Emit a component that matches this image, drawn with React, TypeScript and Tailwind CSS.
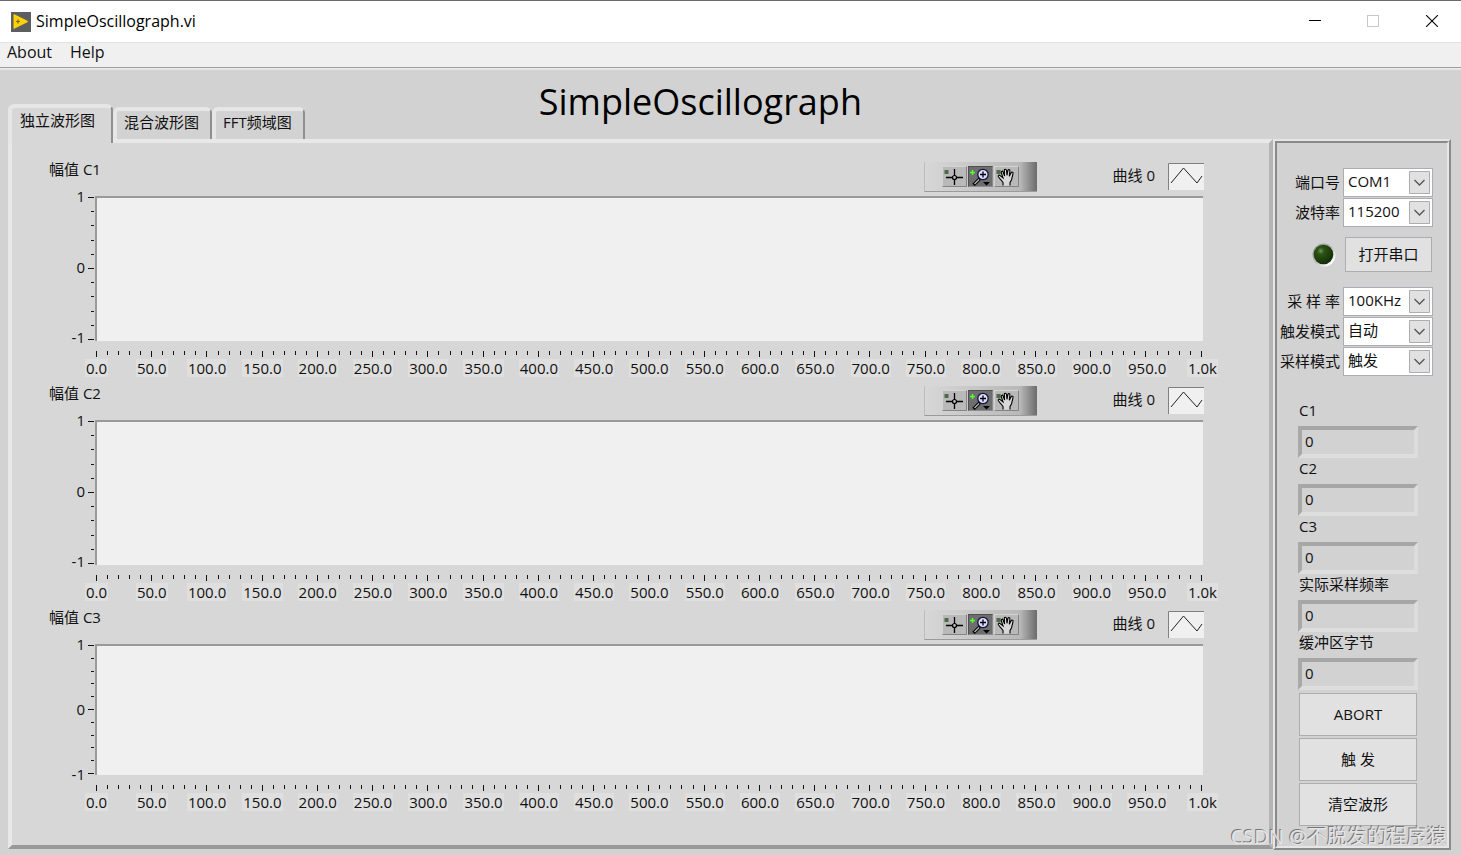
import { useState } from "react";

const TABS = ["独立波形图", "混合波形图", "FFT频域图"];

const X_LABELS = [
  "0.0", "50.0", "100.0", "150.0", "200.0", "250.0", "300.0",
  "350.0", "400.0", "450.0", "500.0", "550.0", "600.0", "650.0",
  "700.0", "750.0", "800.0", "850.0", "900.0", "950.0", "1.0k",
];

const CHARTS = [
  { title: "幅值 C1", height: "h-[145px]" },
  { title: "幅值 C2", height: "h-[145px]" },
  { title: "幅值 C3", height: "h-[131px]" },
];

const PORT_FIELDS = [
  { id: "port", label: "端口号", options: ["COM1", "COM2", "COM3"] },
  { id: "baud", label: "波特率", options: ["115200", "57600", "9600"] },
];

const SAMPLE_FIELDS = [
  { id: "rate", label: "采 样 率", options: ["100KHz", "50KHz", "10KHz"] },
  { id: "trigger", label: "触发模式", options: ["自动", "手动"] },
  { id: "mode", label: "采样模式", options: ["触发", "连续"] },
];

const READOUTS = ["C1", "C2", "C3", "实际采样频率", "缓冲区字节"];

const ACTIONS = ["ABORT", "触 发", "清空波形"];

const TitleBar = () => {
  return (
    <header className="flex h-[42px] items-center border-t border-[#6b6b6b] bg-white pl-[11px]">
      <svg className="h-5 w-5" viewBox="0 0 20 20">
        <rect width="20" height="20" fill="#5d5e60" />
        <path d="M2.500 3.200q0-1.400 1.300-.8l12.600 6.400q1.200.7 0 1.400L3.800 16.600q-1.300.6-1.300-.8z" fill="#ffd200" />
        <path d="M5 9.500h4M7 7.500v4" stroke="#6a6440" strokeWidth="1.200" />
      </svg>
      <span className="ml-[5px] pb-0.5 text-base text-black">SimpleOscillograph.vi</span>
      <div className="ml-auto flex h-full">
        <button className="flex w-[58px] items-center justify-center" aria-label="Minimize">
          <svg className="h-3 w-3" viewBox="0 0 12 12" shapeRendering="crispEdges">
            <path d="M0 4.500h12" stroke="#000" />
          </svg>
        </button>
        <button className="flex w-[58px] items-center justify-center pb-0.5" aria-label="Maximize" disabled>
          <svg className="h-3 w-3" viewBox="0 0 12 12" shapeRendering="crispEdges">
            <path d="M.5.5h11v11H.5z" fill="none" stroke="#c8c8c8" />
          </svg>
        </button>
        <button className="flex w-[59px] items-center justify-center pb-0.5" aria-label="Close">
          <svg className="h-3 w-3" viewBox="0 0 12 12">
            <path d="M0 0l12 12M12 0L0 12" stroke="#000" strokeWidth="1.100" />
          </svg>
        </button>
      </div>
    </header>
  );
};

const Tool = ({ label, active = false, children }: any) => {
  return (
    <button
      aria-label={label}
      className={`h-[21px] w-[25px] border ${
        active
          ? "border-t-[#505050] border-l-[#505050] border-r-[#8c8c8c] border-b-[#8c8c8c] bg-[#6e6e6e]"
          : "border-t-[#d4d4d4] border-l-[#d4d4d4] border-r-[#858585] border-b-[#858585] bg-[#b9b9b9]"
      }`}
    >
      <svg className="h-[19px] w-[23px]" viewBox="0 0 23 19">
        {children}
      </svg>
    </button>
  );
};

const Palette = () => {
  return (
    <div className="flex h-[30px] w-[113px] items-center gap-px border-b border-l border-b-[#9b9b9b] border-l-[#bdbdbd] bg-linear-to-r from-[#d7d7d7] via-[#b8b8b8] via-85% to-[#6c6c6c] pl-[17px]">
      <Tool label="Cursor">
        <path d="M1.500 3h4v4h-4z" fill="#4f6b45" />
        <path d="M3 10.500h17M11.500 2v16" stroke="#000" strokeWidth="1.300" />
        <circle cx="11.500" cy="10.500" r="2" fill="#b9b9b9" stroke="#000" strokeWidth="1.200" />
      </Tool>
      <Tool label="Zoom" active>
        <path d="M1 5.500h5M3.500 3v5" stroke="#5cff2a" strokeWidth="1.400" />
        <path d="M10.500 12L4.500 18" stroke="#000" strokeWidth="3.200" />
        <path d="M10 12.500L5.500 17" stroke="#bbb" strokeWidth="1.200" />
        <circle cx="14" cy="7.500" r="5.200" fill="#dcdcff" stroke="#15153c" strokeWidth="1.300" />
        <path d="M11 7.500h6M14 4.500v6" stroke="#000" strokeWidth="1.300" />
        <path d="M14 15h7l-3.500 3.500z" fill="#000" />
      </Tool>
      <Tool label="Pan">
        <path d="M1.500 3h4v4h-4z" fill="#4f6b45" />
        <path
          d="M8 18.500v-3L3.500 10c-1-1.500.6-2.400 1.700-1.300L8 11 6.200 5.500c-.3-1.500 1.400-1.900 1.900-.5l1.500 4L9.300 3.300c0-1.500 2-1.500 2.200 0l.5 5 .9-5c.4-1.300 2.200-1 2 .5l-.6 5.400 1.900-3.600c.8-1.200 2.300-.4 1.800 1L16.500 13 15 15.500v3"
          fill="#d8d8d8"
          stroke="#000"
          strokeWidth="1.100"
        />
      </Tool>
    </div>
  );
};

const YAxis = () => {
  return (
    <div className="flex w-[83px] justify-end gap-0.5">
      <div className="flex h-[142px] max-h-full flex-col justify-between">
        {["1", "0", "-1"].map((v) => (
          <span key={v} className="flex h-px items-center justify-end leading-none">
            {v}
          </span>
        ))}
      </div>
      <div className="flex max-h-full w-2 flex-col items-end justify-between pt-px pr-px pb-px">
        {Array.from({ length: 11 }, (_, i) => (
          <span key={i} className={`h-px bg-[#111] ${i % 5 === 0 ? "w-1.5" : "w-[3px]"}`} />
        ))}
      </div>
    </div>
  );
};

const XAxis = () => {
  return (
    <div className="mr-px ml-[84px] pt-2.5">
      <div className="flex h-2 justify-between">
        {Array.from({ length: 101 }, (_, i) => (
          <span key={i} className={`w-px bg-[#111] ${i % 5 === 0 ? "h-1.5" : "h-1"}`} />
        ))}
      </div>
      <div className="flex justify-between">
        {X_LABELS.map((x) => (
          <span key={x} className="flex w-px justify-center">
            <span className="bg-[#dfdfdf] px-px leading-[18px]">{x}</span>
          </span>
        ))}
      </div>
    </div>
  );
};

const Chart = ({ title, height }: { title: string; height: string }) => {
  return (
    <section className="pb-[9px]">
      <div className="flex h-[34px] items-start">
        <h2 className="ml-[37px] leading-[14px]">{title}</h2>
        <div className="ml-auto flex items-start">
          <Palette />
          <span className="ml-[76px] leading-[26px]">曲线 0</span>
          <svg className="ml-[13px] mt-px h-[27px] w-9" viewBox="0 0 36 27">
            <rect width="36" height="27" fill="#f0f0f0" />
            <path d="M.5 27V.5H36" fill="none" stroke="#808080" />
            <path d="M3 20L15.500 5 29 20l5-7" fill="none" stroke="#222" />
          </svg>
        </div>
      </div>
      <div className={`flex ${height}`}>
        <YAxis />
        <div className="mr-px flex-1 border-t-2 border-l-2 border-[#999] bg-[#f0f0f0]" />
      </div>
      <XAxis />
    </section>
  );
};

const SelectRow = ({ id, label, options }: { id: string; label: string; options: string[] }) => {
  return (
    <div className="flex h-[30px] items-center justify-end gap-[3px]">
      <label htmlFor={id} className="whitespace-pre">{label}</label>
      <div className="relative">
        <select
          id={id}
          className="block h-[29px] w-[90px] appearance-none border border-[#abadb3] bg-white pb-0.5 pl-1 leading-[25px] outline-none"
        >
          {options.map((o) => (
            <option key={o}>{o}</option>
          ))}
        </select>
        <svg className="pointer-events-none absolute top-[3px] right-[3px] h-[23px] w-[21px]" viewBox="0 0 21 23">
          <path d="M.5.5h20v22H.5z" fill="#e1e1e1" stroke="#adadad" />
          <path d="M5.500 9l5 5 5-5" fill="none" stroke="#555" strokeWidth="1.300" />
        </svg>
      </div>
    </div>
  );
};

const Led = () => {
  return (
    <svg className="h-[26px] w-[26px]" viewBox="0 0 26 26">
      <defs>
        <radialGradient id="led" cx="36%" cy="32%" r="70%">
          <stop offset="0" stopColor="#6f9460" />
          <stop offset=".25" stopColor="#2c5413" />
          <stop offset="1" stopColor="#132c05" />
        </radialGradient>
        <linearGradient id="rim" x1="0" y1="0" x2="1" y2="1">
          <stop offset=".1" stopColor="#8c8c8c" />
          <stop offset=".5" stopColor="#bdbdbd" />
          <stop offset=".85" stopColor="#fff" />
        </linearGradient>
      </defs>
      <circle cx="13" cy="13" r="11.500" fill="url(#rim)" />
      <circle cx="12.500" cy="12.500" r="9.800" fill="url(#led)" />
    </svg>
  );
};

const Sidebar = () => {
  return (
    <aside className="flex w-[178px] flex-col border-2 border-t-[#e6e6e6] border-r-[#8a8a8a] border-b-[#8a8a8a] border-l-[#e6e6e6]">
      <div className="flex-1 border-2 border-t-[#8a8a8a] border-r-[#e6e6e6] border-b-[#e6e6e6] border-l-[#8a8a8a] pt-6">
        <div className="pr-3.5">
          {PORT_FIELDS.map((f) => (
            <SelectRow key={f.id} {...f} />
          ))}
          <div className="my-2.5 flex h-[35px] items-center justify-end gap-2 pr-px">
            <Led />
            <button className="h-[35px] w-[87px] border border-[#adadad] bg-[#e1e1e1]">打开串口</button>
          </div>
          <div className="pt-1">
            {SAMPLE_FIELDS.map((f) => (
              <SelectRow key={f.id} {...f} />
            ))}
          </div>
        </div>
        <div className="mt-6 ml-[21px] w-[120px]">
          {READOUTS.map((r) => (
            <div key={r}>
              <label htmlFor={r} className="block h-[26px] pl-px leading-5">{r}</label>
              <input
                id={r}
                readOnly
                value="0"
                className="block h-8 w-full border-4 border-t-[#a6a6a6] border-r-[#dcdcdc] border-b-[#dedede] border-l-[#a9a9a9] bg-[#d2d2d2] pb-0.5 pl-[3px] outline-none"
              />
            </div>
          ))}
        </div>
        <div className="mt-[3px] ml-[22px] flex w-[118px] flex-col gap-0.5">
          {ACTIONS.map((a) => (
            <button key={a} className="h-[43px] border border-[#adadad] bg-[#e1e1e1]">
              {a}
            </button>
          ))}
        </div>
      </div>
    </aside>
  );
};

export default function App() {
  const [tab, setTab] = useState(0);

  return (
    <div className="relative flex min-h-screen flex-col bg-[#d2d2d2] font-['Open_Sans','Noto_Sans_CJK_SC',sans-serif] text-[15px] text-[#111]">
      <TitleBar />
      <nav className="flex h-7 gap-[18px] border-t border-b-2 border-t-[#e2e2e2] border-b-[#e8e8e8] bg-[#f0f0f0] pl-[7px] text-base leading-[18px] shadow-[inset_0_-1px_0_#a0a0a0]">
        <a href="#about">About</a>
        <a href="#help">Help</a>
      </nav>

      <div className="flex h-[69px] items-end pl-2">
        <div role="tablist" className="flex items-end">
          {TABS.map((t, i) => (
            <button
              key={t}
              role="tab"
              aria-selected={i === tab}
              onClick={() => setTab(i)}
              className={`relative rounded-t-md border-t-4 border-r-2 border-l-4 border-t-[#e6e6e6] border-r-[#8f8f8f] border-l-[#e6e6e6] ${
                i === tab
                  ? "z-10 -mb-1 h-[39px] bg-[#d7d7d7] pr-4 pb-2.5 pl-2"
                  : "h-8 bg-[#d2d2d2] pr-[11px] pb-1.5 pl-[7px]"
              }`}
            >
              {t}
            </button>
          ))}
        </div>
        <h1 className="ml-[234px] self-start pt-2 text-4xl leading-[48px] text-black">SimpleOscillograph</h1>
      </div>

      <main className="flex flex-1 pr-2.5 pb-[5px] pl-2">
        <div className="mb-px flex-1 border-4 border-t-[#e8e8e8] border-r-[#b4b4b4] border-b-[#999] border-l-[#e8e8e8] bg-[#d7d7d7] pt-[19px] pr-[65px]">
          {CHARTS.map((c) => (
            <Chart key={c.title} {...c} />
          ))}
        </div>
        <Sidebar />
      </main>

      <p className="absolute right-3.5 bottom-[3px] text-xl leading-[30px] text-[#e4e4e4] [text-shadow:-1px_-1px_0_#777]">
        CSDN @不脱发的程序猿
      </p>
    </div>
  );
}
